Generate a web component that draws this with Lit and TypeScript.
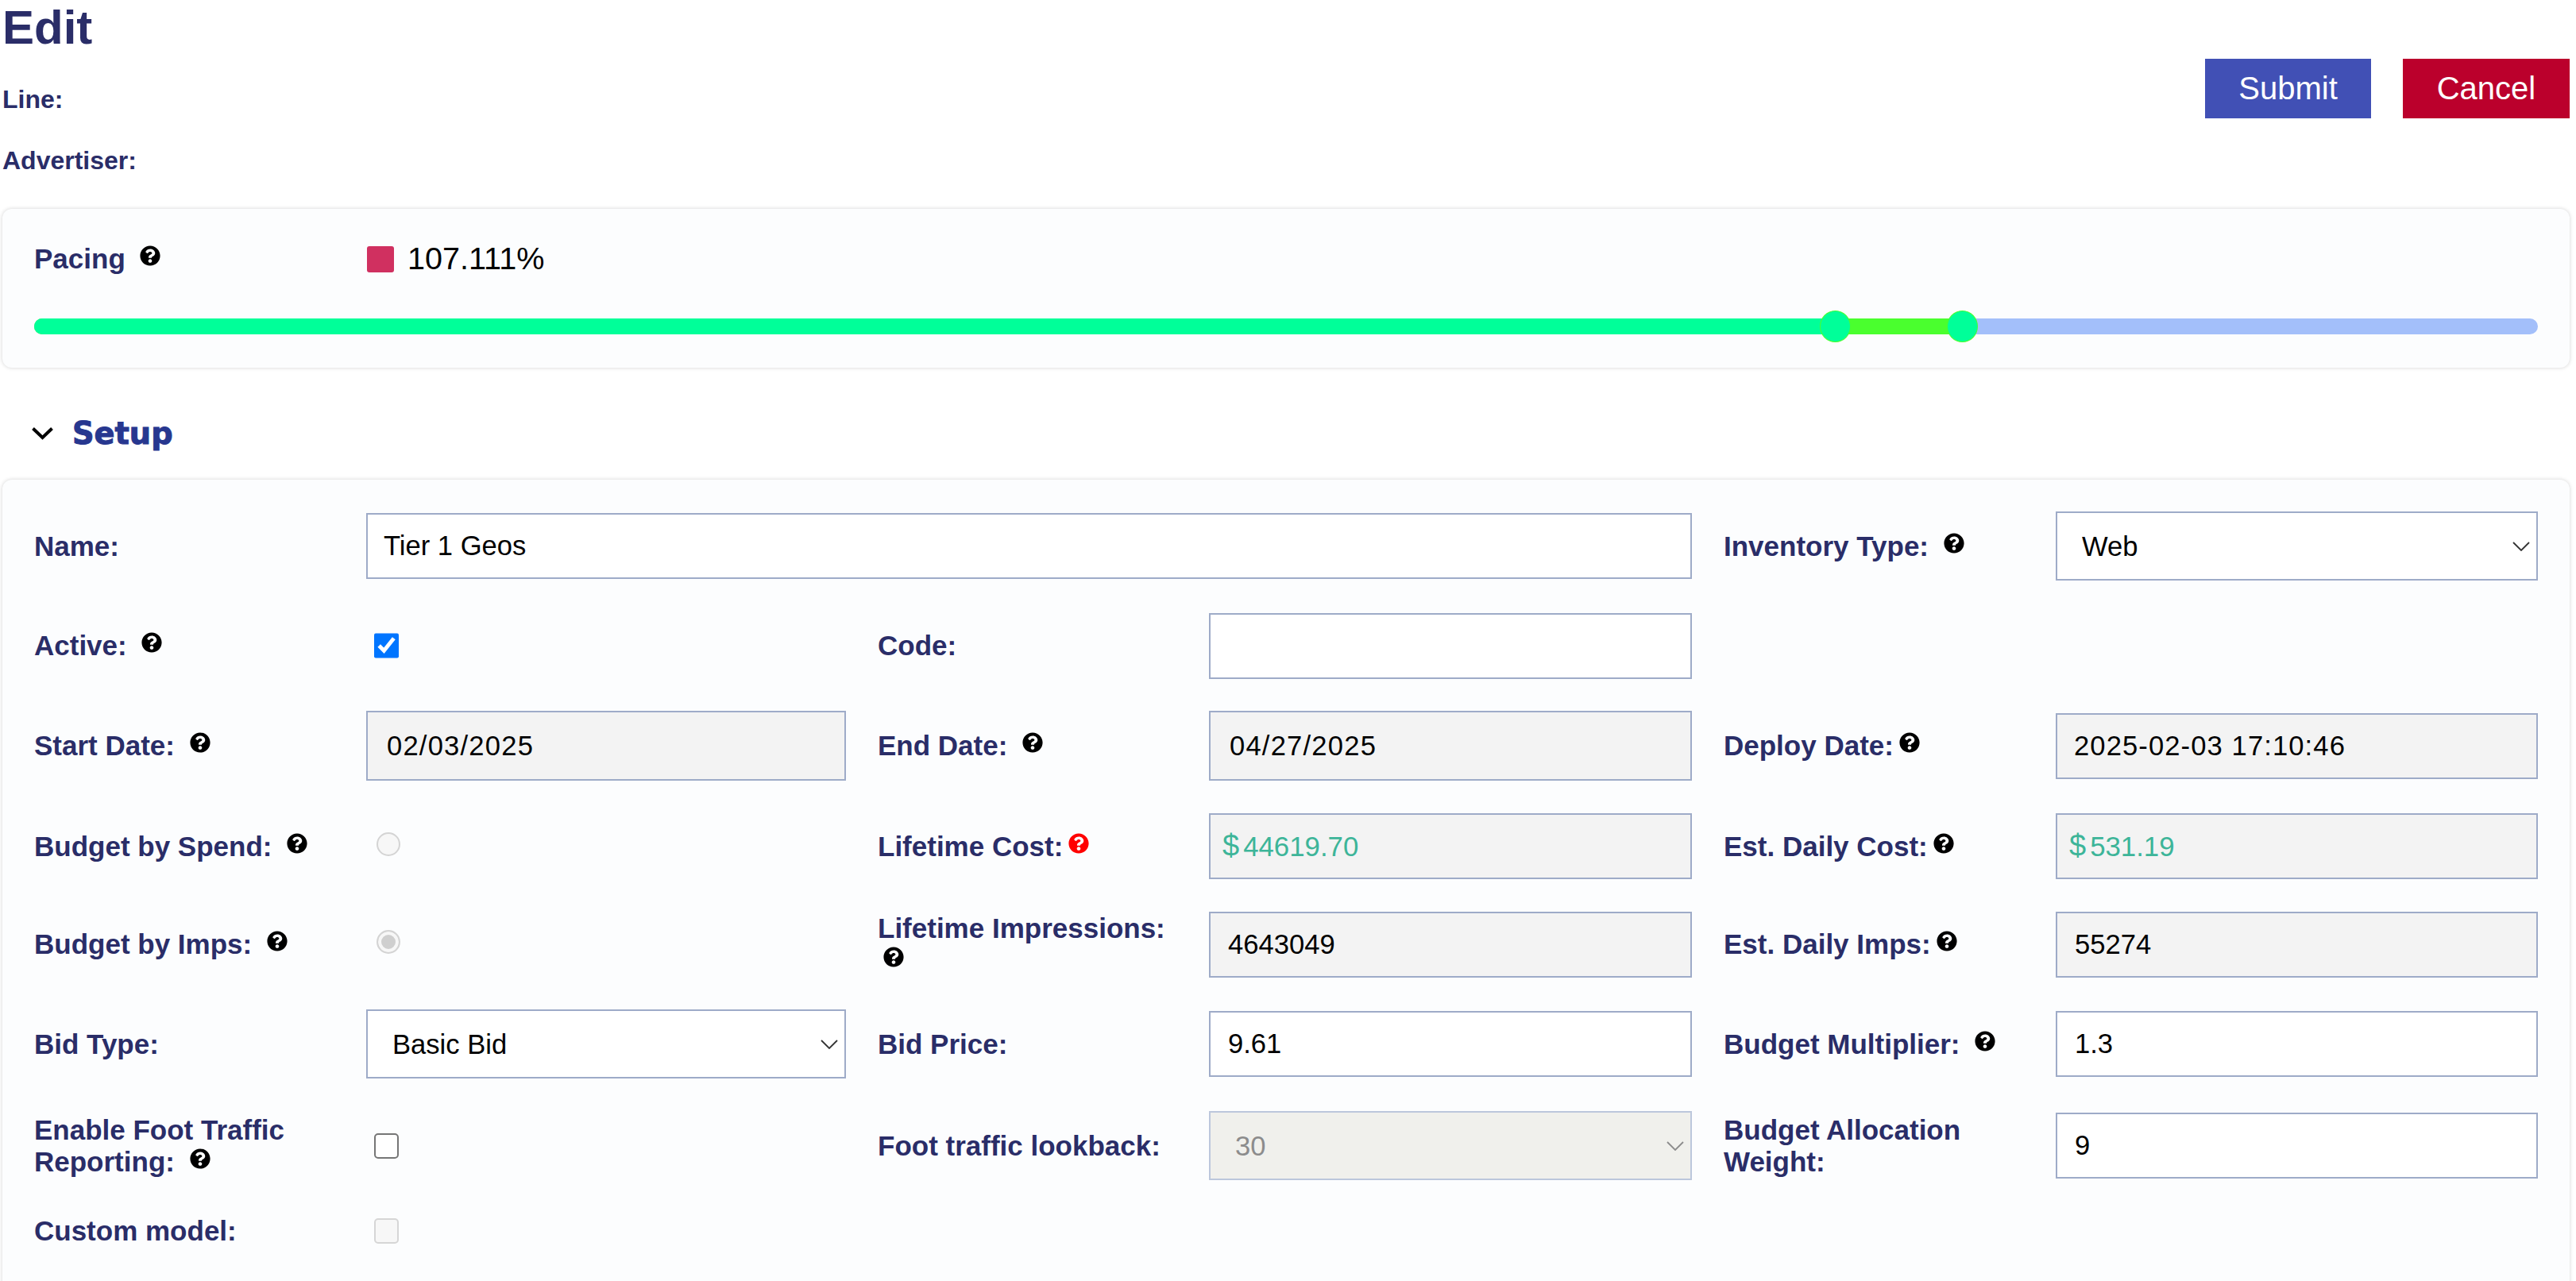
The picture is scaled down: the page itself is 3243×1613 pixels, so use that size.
import { LitElement, html, css, svg } from "lit";
import { customElement } from "lit/decorators.js";

const QUESTION =
  "M504 256c0 136.997-111.043 248-248 248S8 392.997 8 256C8 119.083 119.043 8 256 8s248 111.083 248 248zM262.655 90c-54.497 0-89.255 22.957-116.549 63.758-3.536 5.286-2.353 12.415 2.715 16.258l34.699 26.31c5.205 3.947 12.621 3.008 16.665-2.122 17.864-22.658 30.113-35.797 57.303-35.797 20.429 0 45.698 13.148 45.698 32.958 0 14.976-12.363 22.667-32.534 33.976C247.128 238.528 216 254.941 216 296v4c0 6.627 5.373 12 12 12h56c6.627 0 12-5.373 12-12v-1.333c0-28.462 83.186-29.647 83.186-106.667 0-58.002-60.165-102-116.531-102zM256 338c-25.365 0-46 20.635-46 46 0 25.364 20.635 46 46 46s46-20.636 46-46c0-25.365-20.635-46-46-46z";

const help = (cls = "") =>
  html`<svg class="help ${cls}" viewBox="0 0 512 512" aria-hidden="true">${svg`<path d=${QUESTION}></path>`}</svg>`;

const caret = html`<svg class="caret" viewBox="0 0 22 12" aria-hidden="true"><polyline points="1,1 11,11 21,1"></polyline></svg>`;

@customElement("app-root")
export class AppRoot extends LitElement {
  static styles = css`
    :host {
      display: block;
      height: 1613px;
      overflow: hidden;
      background: #fff;
      font-family: "Liberation Sans", Arial, sans-serif;
      color: #2a2d68;
    }
    .header {
      display: flex;
      justify-content: space-between;
      align-items: center;
      padding: 0 8px 0 3px;
      height: 222px;
    }
    h1 {
      margin: 0;
      font-size: 60px;
      line-height: 70px;
      font-weight: 700;
    }
    .meta {
      margin: 35px 0 0;
      font-size: 32px;
      line-height: 40px;
      font-weight: 700;
    }
    .meta + .meta {
      margin-top: 37px;
    }
    .actions {
      display: flex;
      gap: 40px;
    }
    button {
      width: 210px;
      height: 75px;
      border: 0;
      color: #fff;
      font: 40px "Liberation Sans", Arial, sans-serif;
    }
    .submit {
      background: #4150b5;
      width: 209px;
    }
    .cancel {
      background: #bb002c;
    }
    .card {
      margin: 0 8px 0 3px;
      padding: 0 40px;
      background: #fcfdfe;
      border-radius: 12px;
      box-shadow: 0 0 5px rgba(0, 0, 0, 0.18);
    }
    .pacing {
      margin-top: 41px;
      height: 200px;
      box-sizing: border-box;
      padding-top: 40px;
    }
    .pacing-row {
      display: grid;
      grid-template-columns: 419px 1fr;
      align-items: center;
      height: 40px;
    }
    .status {
      display: flex;
      align-items: center;
      gap: 17px;
      font-size: 39.6px;
      color: #000;
    }
    .swatch {
      width: 34px;
      height: 33px;
      margin-top: 2px;
      border-radius: 3px;
      background: #d03060;
    }
    .slider {
      position: relative;
      margin-top: 58px;
      height: 20px;
      border-radius: 10px;
      background: #a3bffa;
    }
    .seg {
      position: absolute;
      left: 0;
      top: 0;
      bottom: 0;
      border-radius: 10px 0 0 10px;
    }
    .seg.b {
      background: #4aff2e;
    }
    .seg.a {
      background: #00ff99;
    }
    .thumb {
      position: absolute;
      top: -10px;
      width: 39px;
      height: 40px;
      box-sizing: border-box;
      margin-left: -19.5px;
      border-radius: 50%;
      background: #00ff99;
      border: 1px solid #4aff2e;
    }
    .section {
      display: flex;
      align-items: center;
      box-sizing: border-box;
      height: 141px;
      padding: 24px 0 0 40px;
      gap: 24px;
    }
    .chev {
      width: 27px;
      height: 17px;
      fill: none;
      stroke: #000;
      stroke-width: 4;
    }
    h2 {
      margin: 0;
      font-family: "DejaVu Sans", sans-serif;
      font-size: 38.3px;
      line-height: 44px;
      font-weight: 700;
      color: #27378f;
      -webkit-text-stroke: 1px #27378f;
    }
    .form {
      padding-top: 40px;
      padding-bottom: 60px;
      display: grid;
      grid-template-columns: 418px 604px 457px 608px 458px 607px;
      row-gap: 40.7px;
      align-items: center;
    }
    .label {
      font-size: 35px;
      line-height: 40px;
      font-weight: 700;
      padding-right: 35px;
    }
    .pacing-row .label {
      padding-right: 0;
    }
    .col2 {
      padding-left: 40px;
    }
    .help {
      display: inline-block;
      width: 26px;
      height: 26px;
      margin-left: 9px;
      vertical-align: 3px;
      fill: #000;
    }
    .help.tight {
      margin-left: 7px;
    }
    .help.wrap {
      margin-left: 7px;
    }
    .help.red {
      fill: #f00;
    }
    input[type="text"] {
      display: block;
      width: 100%;
      box-sizing: border-box;
      height: 83px;
      margin: 0;
      padding: 0 20px 0 22px;
      border: 2px solid #9eabc8;
      border-radius: 0;
      outline: 0;
      background: #fff;
      color: #000;
      font: 34.6px "Liberation Sans", Arial, sans-serif;
    }
    input.name {
      padding-left: 20px;
    }
    input.ro {
      background: #f3f3f3;
    }
    input.date {
      height: 88px;
      padding-left: 24px;
      letter-spacing: 1.2px;
    }
    input.stamp {
      padding-left: 21px;
      letter-spacing: 1.1px;
    }
    .span3 {
      grid-column: 2 / span 3;
    }
    .money {
      display: flex;
      align-items: center;
      height: 83px;
      box-sizing: border-box;
      padding-left: 15px;
      border: 2px solid #9eabc8;
      background: #f3f3f3;
      color: #3db599;
      font-size: 34.8px;
    }
    .money .cur {
      font-size: 38px;
      margin-right: 5px;
    }
    .select {
      position: relative;
      height: 87px;
    }
    select {
      display: block;
      width: 100%;
      height: 100%;
      box-sizing: border-box;
      appearance: none;
      -webkit-appearance: none;
      padding: 0 50px 0 31px;
      border: 2px solid #9eabc8;
      border-radius: 0;
      outline: 0;
      background: #fff;
      color: #000;
      font: 34.6px "Liberation Sans", Arial, sans-serif;
    }
    .select.off select {
      background: #f0f0ec;
      border-color: #bcc7dc;
      color: #8c8c8c;
      opacity: 1;
    }
    .caret {
      position: absolute;
      right: 10px;
      top: 50%;
      width: 22px;
      height: 12px;
      margin-top: -6px;
      fill: none;
      stroke: #333;
      stroke-width: 1.8;
      pointer-events: none;
    }
    .select.off .caret {
      stroke: #8c8c8c;
    }
    .box {
      display: block;
      width: 31px;
      height: 32px;
      margin: 0 0 0 10px;
    }
    .box.plain {
      appearance: none;
      -webkit-appearance: none;
      box-sizing: border-box;
      border: 2px solid #767676;
      border-radius: 5px;
      background: #fff;
    }
    .box.plain:disabled {
      border-color: #d6d6d6;
      background: #f7f7f7;
    }
    .radio {
      display: block;
      appearance: none;
      -webkit-appearance: none;
      box-sizing: border-box;
      width: 30px;
      height: 30px;
      margin: -6px 0 0 13px;
      border: 2.5px solid #d4d4d4;
      border-radius: 50%;
      background: #f7f7f7;
    }
    .radio:checked {
      background: #cfcfcf;
      box-shadow: inset 0 0 0 4px #f7f7f7;
    }
    .last {
      margin-top: 3px;
    }
  `;

  render() {
    return html`
      <div class="header">
        <div>
          <h1>Edit</h1>
          <p class="meta">Line:</p>
          <p class="meta">Advertiser:</p>
        </div>
        <div class="actions">
          <button class="submit">Submit</button>
          <button class="cancel">Cancel</button>
        </div>
      </div>

      <section class="card pacing">
        <div class="pacing-row">
          <div class="label">Pacing ${help()}</div>
          <div class="status"><span class="swatch"></span><span>107.111%</span></div>
        </div>
        <div class="slider">
          <div class="seg b" style="width: 77%"></div>
          <div class="seg a" style="width: 71.95%"></div>
          <div class="thumb" style="left: 71.95%"></div>
          <div class="thumb" style="left: 77%"></div>
        </div>
      </section>

      <div class="section">
        <svg class="chev" viewBox="0 0 27 17" aria-hidden="true"><polyline points="1.5,2.5 13.5,14 25.5,2.5"></polyline></svg>
        <h2>Setup</h2>
      </div>

      <section class="card form">
        <div class="label">Name:</div>
        <div class="span3"><input type="text" class="name" value="Tier 1 Geos" /></div>
        <div class="label col2">Inventory Type: ${help()}</div>
        <div class="select"><select><option>Web</option></select>${caret}</div>

        <div class="label">Active: ${help()}</div>
        <div><input class="box" type="checkbox" checked /></div>
        <div class="label col2">Code:</div>
        <div><input type="text" value="" /></div>
        <div></div>
        <div></div>

        <div class="label">Start Date: ${help()}</div>
        <div><input type="text" class="ro date" readonly value="02/03/2025" /></div>
        <div class="label col2">End Date: ${help()}</div>
        <div><input type="text" class="ro date" readonly value="04/27/2025" /></div>
        <div class="label col2">Deploy Date:${help("tight")}</div>
        <div><input type="text" class="ro stamp" readonly value="2025-02-03 17:10:46" /></div>

        <div class="label">Budget by Spend: ${help()}</div>
        <div><input class="radio" type="radio" name="budget" disabled /></div>
        <div class="label col2">Lifetime Cost:${help("red tight")}</div>
        <div class="money"><span class="cur">$</span><span>44619.70</span></div>
        <div class="label col2">Est. Daily Cost:${help("tight")}</div>
        <div class="money"><span class="cur">$</span><span>531.19</span></div>

        <div class="label">Budget by Imps: ${help()}</div>
        <div><input class="radio" type="radio" name="budget" disabled checked /></div>
        <div class="label col2">Lifetime Impressions: ${help("wrap")}</div>
        <div><input type="text" class="ro" readonly value="4643049" /></div>
        <div class="label col2">Est. Daily Imps:${help("tight")}</div>
        <div><input type="text" class="ro" readonly value="55274" /></div>

        <div class="label">Bid Type:</div>
        <div class="select"><select><option>Basic Bid</option></select>${caret}</div>
        <div class="label col2">Bid Price:</div>
        <div><input type="text" value="9.61" /></div>
        <div class="label col2">Budget Multiplier: ${help()}</div>
        <div><input type="text" value="1.3" /></div>

        <div class="label">Enable Foot Traffic Reporting: ${help()}</div>
        <div><input class="box plain" type="checkbox" /></div>
        <div class="label col2">Foot traffic lookback:</div>
        <div class="select off"><select disabled><option>30</option></select>${caret}</div>
        <div class="label col2">Budget Allocation Weight:</div>
        <div><input type="text" value="9" /></div>

        <div class="label last">Custom model:</div>
        <div class="last"><input class="box plain" type="checkbox" disabled /></div>
      </section>
    `;
  }
}
